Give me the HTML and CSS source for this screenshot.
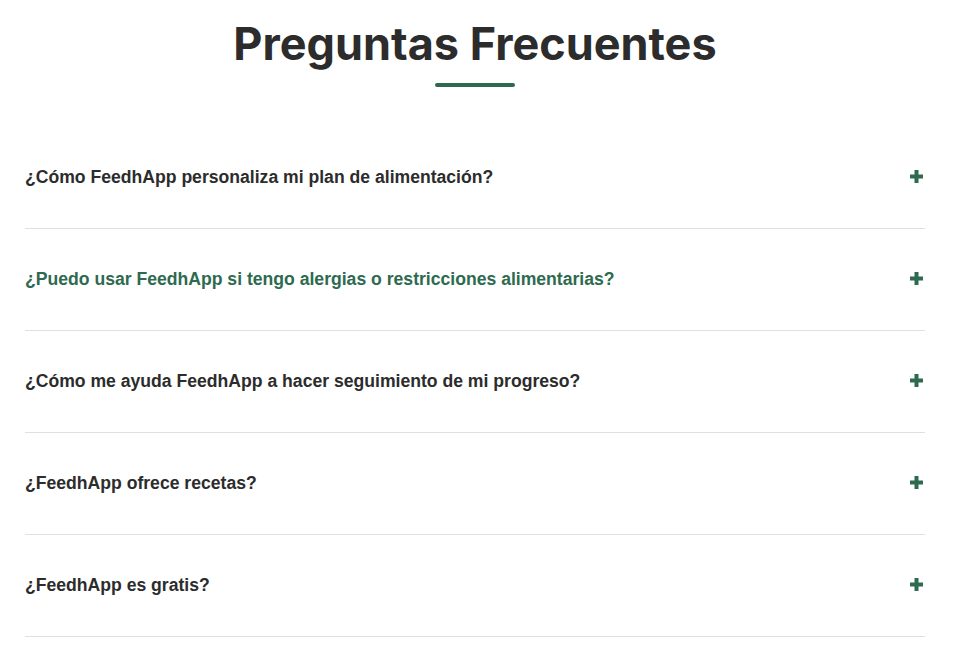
FILE: index.html
```html
<!DOCTYPE html>
<html lang="es">
<head>
<meta charset="utf-8">
<title>Preguntas Frecuentes</title>
<link rel="stylesheet" href="styles.css">
</head>
<body>
<section class="faq">
  <h2 class="faq-title">Preguntas Frecuentes</h2>
  <div class="faq-bar"></div>
  <div class="faq-list">
    <div class="faq-item">
      <span class="faq-q">¿Cómo FeedhApp personaliza mi plan de alimentación?</span>
      <svg class="faq-icon" viewBox="0 0 13 13" width="13" height="13"><rect x="4.5" y="0" width="4" height="13"/><rect x="0" y="4.5" width="13" height="4"/></svg>
    </div>
    <div class="faq-item">
      <span class="faq-q faq-q--active">¿Puedo usar FeedhApp si tengo alergias o restricciones alimentarias?</span>
      <svg class="faq-icon" viewBox="0 0 13 13" width="13" height="13"><rect x="4.5" y="0" width="4" height="13"/><rect x="0" y="4.5" width="13" height="4"/></svg>
    </div>
    <div class="faq-item">
      <span class="faq-q">¿Cómo me ayuda FeedhApp a hacer seguimiento de mi progreso?</span>
      <svg class="faq-icon" viewBox="0 0 13 13" width="13" height="13"><rect x="4.5" y="0" width="4" height="13"/><rect x="0" y="4.5" width="13" height="4"/></svg>
    </div>
    <div class="faq-item">
      <span class="faq-q">¿FeedhApp ofrece recetas?</span>
      <svg class="faq-icon" viewBox="0 0 13 13" width="13" height="13"><rect x="4.5" y="0" width="4" height="13"/><rect x="0" y="4.5" width="13" height="4"/></svg>
    </div>
    <div class="faq-item">
      <span class="faq-q">¿FeedhApp es gratis?</span>
      <svg class="faq-icon" viewBox="0 0 13 13" width="13" height="13"><rect x="4.5" y="0" width="4" height="13"/><rect x="0" y="4.5" width="13" height="4"/></svg>
    </div>
  </div>
</section>
</body>
</html>
```

FILE: styles.css
```css
html, body {
  margin: 0;
  padding: 0;
  background: #ffffff;
}

.faq {
  width: 900px;
  margin-left: 25px;
  padding-top: 18px;
  display: flex;
  flex-direction: column;
  align-items: center;
}

.faq-title {
  margin: 0;
  font-family: Inter, "Liberation Sans", sans-serif;
  font-weight: 700;
  font-size: 45px;
  line-height: 52px;
  color: #2c2c2c;
}

.faq-bar {
  width: 80px;
  height: 4px;
  border-radius: 2px;
  background: #2d6a4f;
  margin-top: 13px;
}

.faq-list {
  align-self: stretch;
  margin-top: 40px;
}

.faq-item {
  height: 101px;
  border-bottom: 1px solid #e0e0e0;
  display: flex;
  align-items: center;
  justify-content: space-between;
  padding-right: 2px;
}

.faq-q {
  font-family: "Liberation Sans", Arial, sans-serif;
  font-weight: 700;
  font-size: 17.6px;
  color: #2c2c2c;
}

.faq-q--active {
  color: #2d6a4f;
}

.faq-icon {
  fill: #2d6a4f;
  display: block;
  margin-bottom: 3px;
}
```
